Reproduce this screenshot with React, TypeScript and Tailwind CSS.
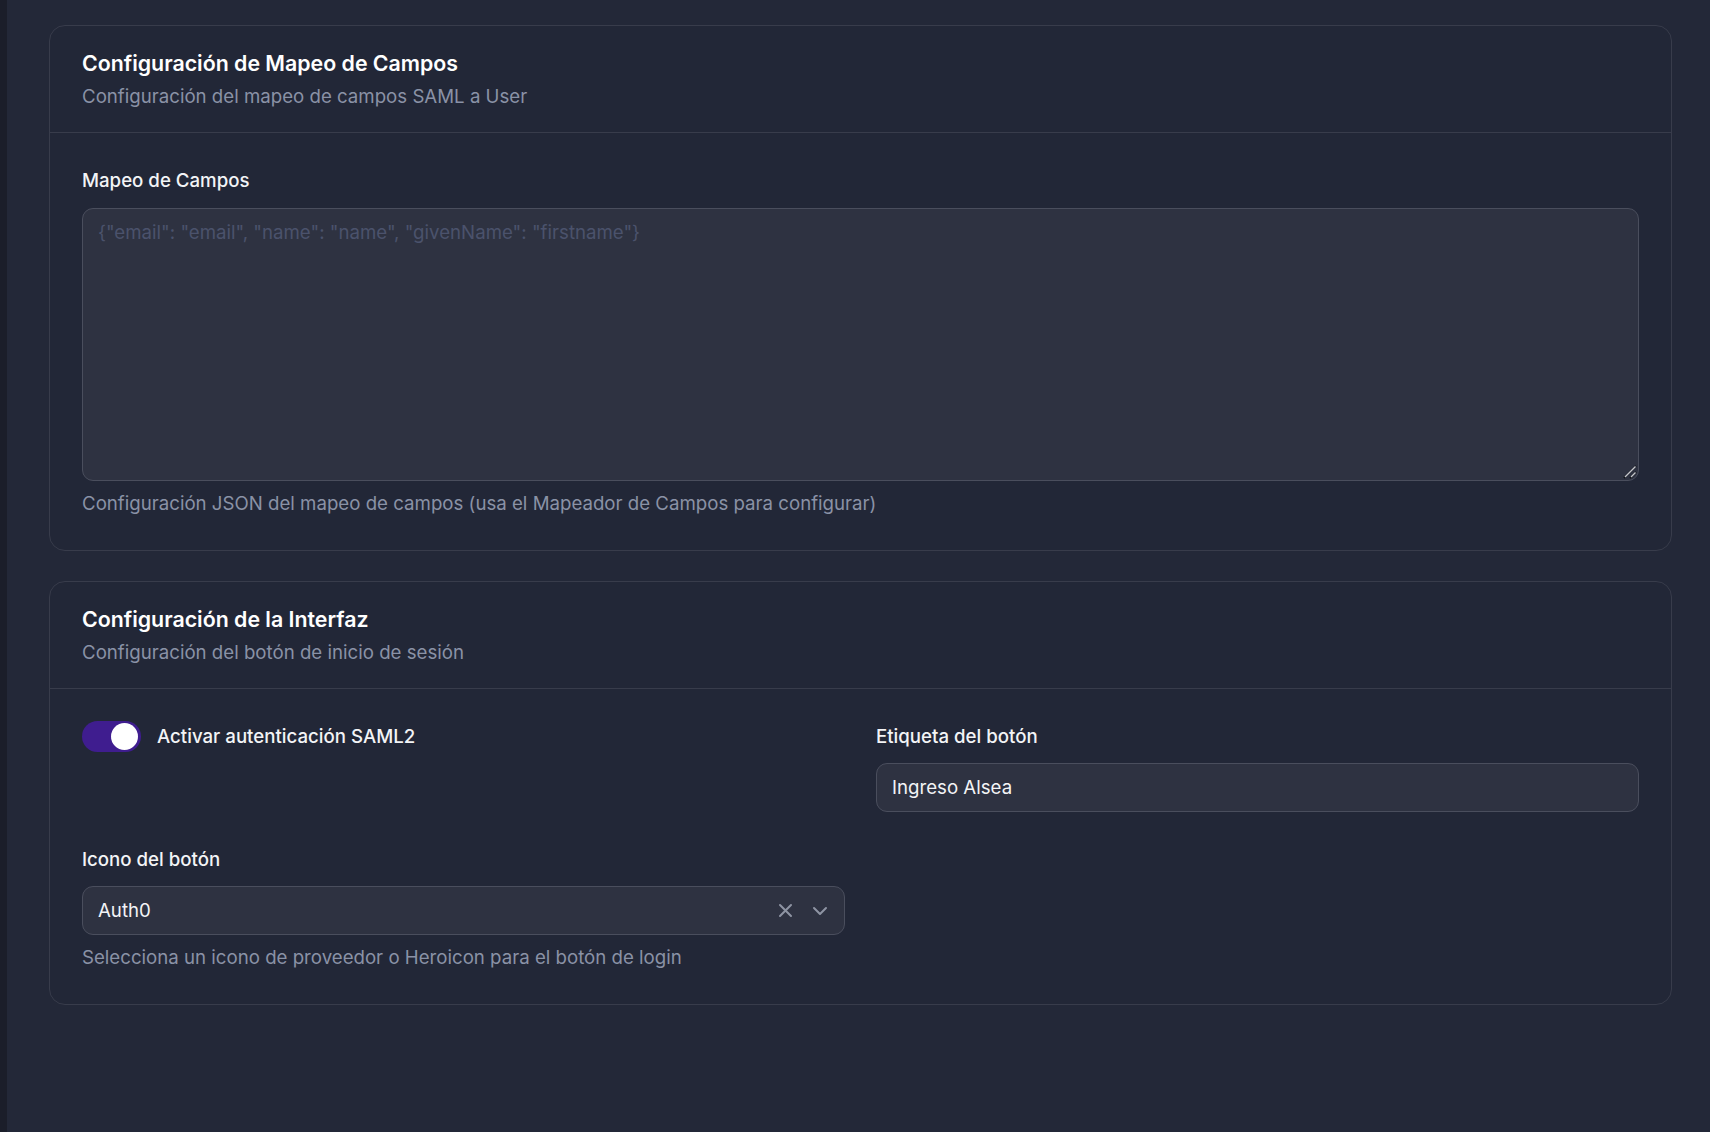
import React from "react";

function XIcon() {
  return (
    <svg width="15" height="15" viewBox="0 0 15 15" fill="none" className="block">
      <path d="M2 2L13 13M13 2L2 13" stroke="#8e94a3" strokeWidth="2" strokeLinecap="round" />
    </svg>
  );
}

function ChevronIcon() {
  return (
    <svg width="16" height="10" viewBox="0 0 16 10" fill="none" className="block">
      <path d="M2 2L8 8L14 2" stroke="#8e94a3" strokeWidth="2" strokeLinecap="round" strokeLinejoin="round" />
    </svg>
  );
}

function ResizeHandle() {
  return (
    <svg width="14" height="14" viewBox="0 0 14 14" fill="none" className="block">
      <path d="M1 13L13 1" stroke="#111318" strokeWidth="2" />
      <path d="M2 12L12.5 1.5" stroke="#c4c6cc" strokeWidth="1.4" />
      <path d="M7 13L13 7" stroke="#111318" strokeWidth="2" />
      <path d="M8 12L12.5 7.5" stroke="#c4c6cc" strokeWidth="1.4" />
    </svg>
  );
}

function CardHeader({ title, desc }: { title: string; desc: string }) {
  return (
    <div className="px-[32px] pt-[21px] pb-[21px] border-b border-[#383c4b]">
      <h2 className="text-[21.33px] leading-[32px] font-semibold text-white">{title}</h2>
      <p className="mt-[4px] text-[18.67px] leading-[28px] text-[#8a92a6]">{desc}</p>
    </div>
  );
}

export default function App() {
  return (
    <div
      className="flex min-h-[1132px] w-full bg-[#232838]"
      style={{ fontFamily: "Inter, 'Noto Sans', sans-serif" }}
    >
      <div className="w-[7px] shrink-0 bg-[#1b1e2a]" />
      <div className="flex-1 pl-[42px] pr-[38px] pt-[25px] flex flex-col gap-[30px]">
        {/* Card 1 */}
        <section className="rounded-[16px] border border-[#383c4b] bg-[#222737]">
          <CardHeader
            title="Configuración de Mapeo de Campos"
            desc="Configuración del mapeo de campos SAML a User"
          />
          <div className="px-[32px] pt-[34px] pb-[32px] flex flex-col">
            <label className="text-[18.67px] leading-[28px] font-medium text-[#f3f4f6]">
              Mapeo de Campos
            </label>
            <div className="relative mt-[13px]">
              <textarea
                className="block h-[273px] w-full resize-none rounded-[11px] border border-[#4a4e5d] bg-[#2e3241] px-[15px] pt-[10px] text-[18.67px] leading-[28px] text-white placeholder:text-[#4b526c] outline-none"
                placeholder={'{"email": "email", "name": "name", "givenName": "firstname"}'}
              />
              <span className="pointer-events-none absolute bottom-[2px] right-[2px]">
                <ResizeHandle />
              </span>
            </div>
            <p className="mt-[9px] text-[18.67px] leading-[28px] text-[#8a92a6]">
              Configuración JSON del mapeo de campos (usa el Mapeador de Campos para configurar)
            </p>
          </div>
        </section>

        {/* Card 2 */}
        <section className="rounded-[16px] border border-[#383c4b] bg-[#222737]">
          <CardHeader
            title="Configuración de la Interfaz"
            desc="Configuración del botón de inicio de sesión"
          />
          <div className="px-[32px] pt-[34px] pb-[32px] grid grid-cols-2 gap-x-[31px] gap-y-[34px]">
            <div className="flex items-start">
              <div className="flex items-center gap-[16px] -mt-[2px]">
                <div className="relative h-[31px] w-[59px] shrink-0 rounded-full bg-[#3f1d8f]">
                  <span className="absolute right-[3px] top-[2px] h-[27px] w-[27px] rounded-full bg-white" />
                </div>
                <span className="text-[18.67px] leading-[28px] font-medium text-[#f3f4f6]">
                  Activar autenticación SAML2
                </span>
              </div>
            </div>
            <div className="flex flex-col">
              <label className="text-[18.67px] leading-[28px] font-medium text-[#f3f4f6]">
                Etiqueta del botón
              </label>
              <div className="mt-[12px] h-[49px] rounded-[11px] border border-[#4a4e5d] bg-[#2e3241] flex items-center px-[15px]">
                <span className="text-[18.67px] leading-[28px] text-[#f3f4f6]">Ingreso Alsea</span>
              </div>
            </div>
            <div className="flex flex-col">
              <label className="text-[18.67px] leading-[28px] font-medium text-[#f3f4f6]">
                Icono del botón
              </label>
              <div className="mt-[12px] h-[49px] rounded-[11px] border border-[#4a4e5d] bg-[#2e3241] flex items-center pl-[15px] pr-[16px]">
                <span className="flex-1 text-[18.67px] leading-[28px] text-[#f3f4f6]">Auth0</span>
                <span className="mr-[19px]">
                  <XIcon />
                </span>
                <ChevronIcon />
              </div>
              <p className="mt-[9px] text-[18.67px] leading-[28px] text-[#8a92a6]">
                Selecciona un icono de proveedor o Heroicon para el botón de login
              </p>
            </div>
            <div />
          </div>
        </section>
      </div>
    </div>
  );
}
